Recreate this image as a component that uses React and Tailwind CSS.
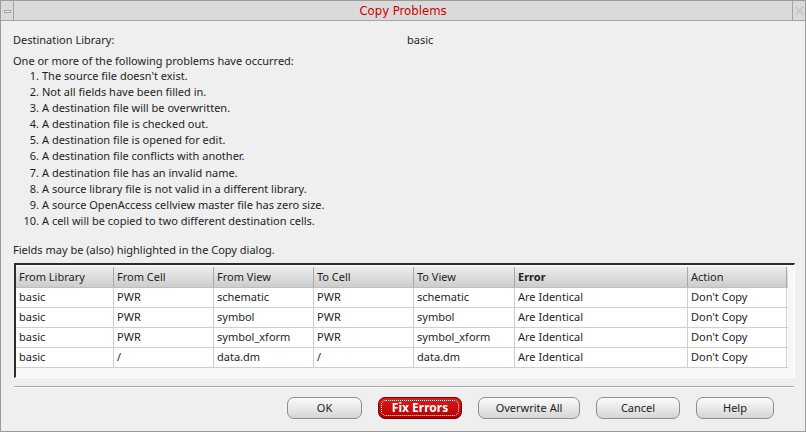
import React from 'react';

const problems = [
  "The source file doesn't exist.",
  "Not all fields have been filled in.",
  "A destination file will be overwritten.",
  "A destination file is checked out.",
  "A destination file is opened for edit.",
  "A destination file conflicts with another.",
  "A destination file has an invalid name.",
  "A source library file is not valid in a different library.",
  "A source OpenAccess cellview master file has zero size.",
  "A cell will be copied to two different destination cells.",
];

const columns = [
  { label: "From Library", w: "w-[98px]" },
  { label: "From Cell", w: "w-[100px]" },
  { label: "From View", w: "w-[100px]" },
  { label: "To Cell", w: "w-[100px]" },
  { label: "To View", w: "w-[101px]" },
  { label: "Error", w: "w-[173px]", bold: true },
  { label: "Action", w: "w-[99px]" },
];

const rows = [
  ["basic", "PWR", "schematic", "PWR", "schematic", "Are Identical", "Don't Copy"],
  ["basic", "PWR", "symbol", "PWR", "symbol", "Are Identical", "Don't Copy"],
  ["basic", "PWR", "symbol_xform", "PWR", "symbol_xform", "Are Identical", "Don't Copy"],
  ["basic", "/", "data.dm", "/", "data.dm", "Are Identical", "Don't Copy"],
];

const Button = ({ label, w, primary }) => {
  if (primary) {
    return (
      <button className={`${w} h-[22px] rounded-[7px] border border-[#7a0000] bg-gradient-to-b from-[#e01a1a] to-[#b00000] p-[2px]`}>
        <div className="h-full w-full rounded-[5px] border border-dotted border-white flex items-center justify-center text-white font-bold text-[12px] leading-none">
          {label}
        </div>
      </button>
    );
  }
  return (
    <button className={`${w} h-[22px] rounded-[7px] border border-[#8c8c8c] bg-gradient-to-b from-[#fbfbfb] to-[#d6d6d6] text-[11px] text-[#222] leading-none`}>
      {label}
    </button>
  );
};

export default function App() {
  return (
    <div className="w-[806px] h-[432px] border border-[#9b9b9b] bg-[#efefef] flex flex-col text-[#1e1e1e]" style={{ fontFamily: '"Noto Sans", "Open Sans", sans-serif' }}>
      {/* title bar */}
      <div className="h-[20px] flex border-b border-[#a3a3a3] bg-[#dadada] shrink-0">
        <div className="w-[13px] border-r border-[#a3a3a3] flex items-center justify-center">
          <div className="w-[7px] h-[3px] border border-[#9a9a9a] bg-white mt-[1px]"></div>
        </div>
        <div className="flex-1 flex items-center justify-center text-[#d00000] text-[13px]" style={{ fontFamily: '"DejaVu Sans Condensed", "DejaVu Sans", sans-serif', fontStretch: 'condensed' }}>
          Copy Problems
        </div>
        <div className="w-[13px] border-l border-[#a3a3a3] flex items-center justify-center">
          <svg width="9" height="10" viewBox="0 0 9 10">
            <path d="M1 1 L8 9 M8 1 L1 9" stroke="#bcbcbc" strokeWidth="2" strokeDasharray="1 1" fill="none" />
          </svg>
        </div>
      </div>

      {/* body */}
      <div className="flex-1 flex flex-col px-[12px] text-[11px]">
        <div className="mt-[11px] h-[16px] leading-[16px] flex">
          <span className="w-[394px]">Destination Library:</span>
          <span>basic</span>
        </div>
        <div className="mt-[5px] leading-[16px]">One or more of the following problems have occurred:</div>
        <div className="mt-[-1px] flex flex-col">
          {problems.map((p, i) => (
            <div key={i} className="flex leading-[16.1px]">
              <span className="w-[26px] text-right">{i + 1}.</span>
              <span className="ml-[3px]">{p}</span>
            </div>
          ))}
        </div>
        <div className="mt-[13px] leading-[16px]">Fields may be (also) highlighted in the Copy dialog.</div>

        {/* table */}
        <div className="mt-[5px] ml-[1px] w-[781px] h-[115px] border-t-2 border-l-2 border-t-[#2c2c2c] border-l-[#2c2c2c] border-r border-b border-r-[#fdfdfd] border-b-[#fdfdfd] bg-[#f7f7f7] pt-[2px]">
          <div className="flex h-[21px] bg-gradient-to-b from-[#ececec] to-[#cdcdcd] border-b border-[#bdbdbd] w-[772px]">
            {columns.map((c, i) => (
              <div key={i} className={`${c.w} border-r border-[#a8a8a8] px-[3px] flex items-center ${c.bold ? 'font-bold' : ''}`}>
                {c.label}
              </div>
            ))}
          </div>
          {rows.map((r, ri) => (
            <div key={ri} className="flex h-[20px] bg-white border-b border-[#cfcfcf] w-[772px]">
              {r.map((cell, ci) => (
                <div key={ci} className={`${columns[ci].w} border-r border-[#cfcfcf] px-[3px] flex items-center`}>
                  {cell}
                </div>
              ))}
            </div>
          ))}
        </div>

        <div className="mt-[8px] ml-[1px] w-[780px] border-t border-[#a9a9a9] border-b border-b-white"></div>

        <div className="mt-[9px] flex gap-[16px] pl-[274px]">
          <Button label="OK" w="w-[75px]" />
          <Button label="Fix Errors" w="w-[84px]" primary />
          <Button label="Overwrite All" w="w-[102px]" />
          <Button label="Cancel" w="w-[84px]" />
          <Button label="Help" w="w-[78px]" />
        </div>
      </div>
    </div>
  );
}
